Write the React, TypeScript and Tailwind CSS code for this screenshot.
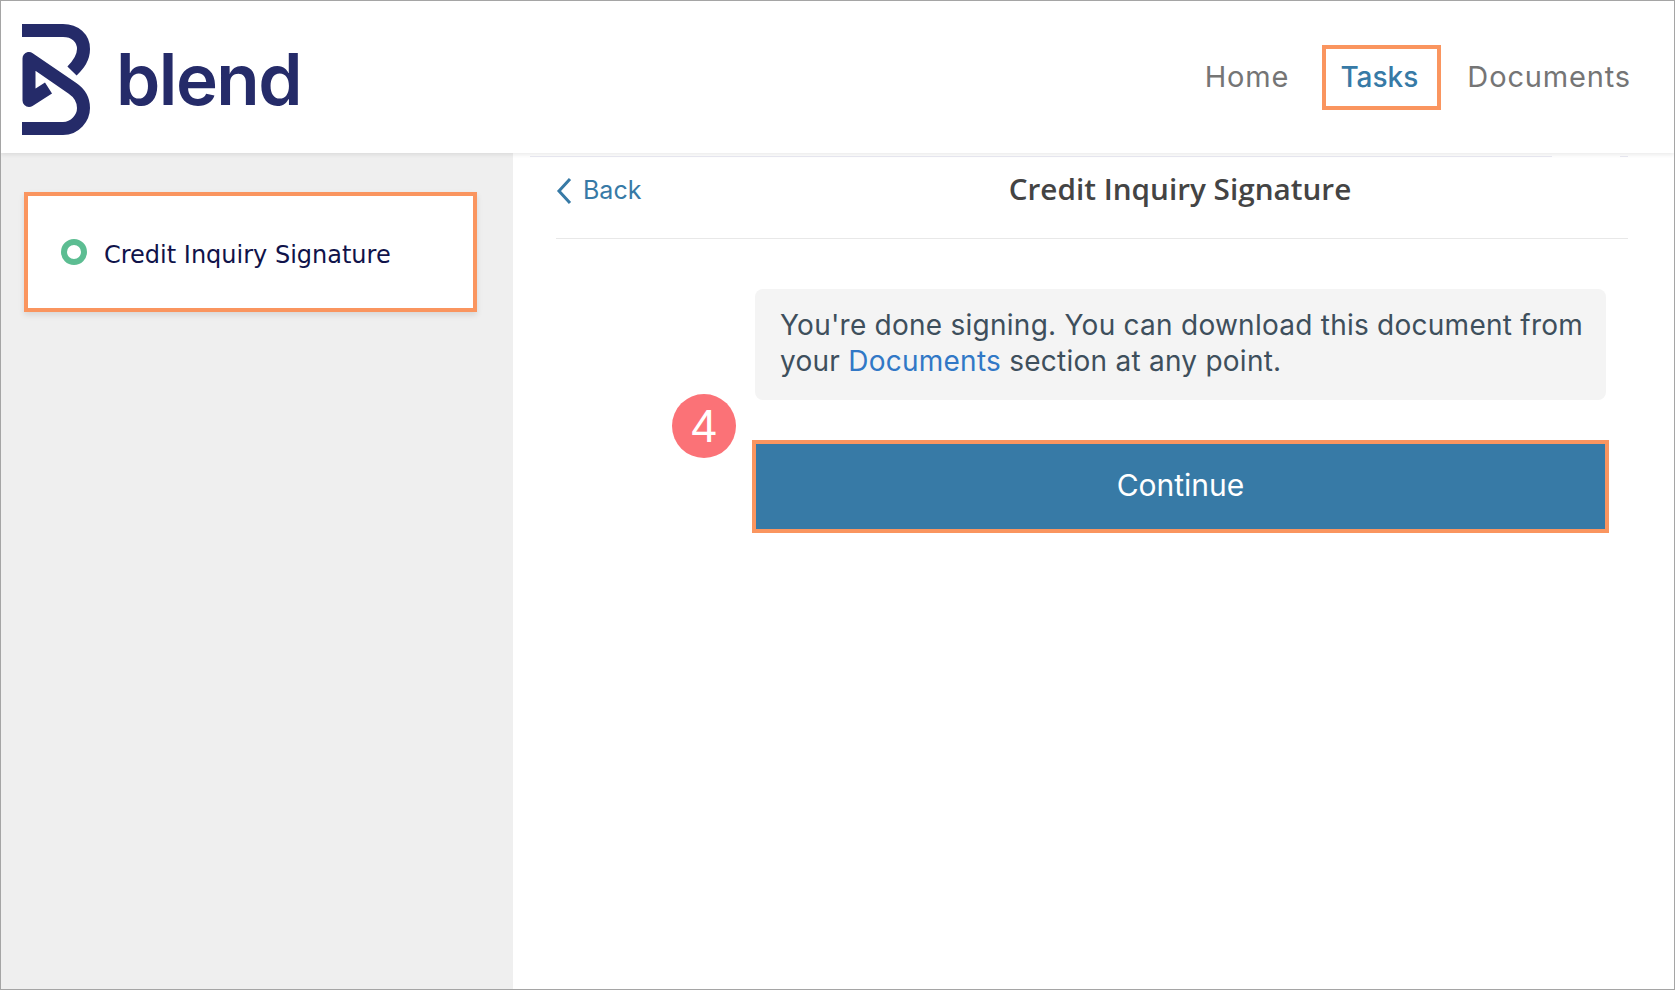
const inter = "font-['Inter',sans-serif]";

function Logo() {
  return (
    <div className="flex items-center gap-[24px] mt-[6px]">
      <svg width="70" height="112" viewBox="22 24 70 112" fill="none" stroke="#252b69" strokeWidth="13">
        <path d="M22 30.5H63C75 30.5 83.5 38 83.5 49C83.5 58 79 64 72 71" />
        <path d="M22 128.5H63C75 128.5 83.5 118 83.5 108C83.5 98 78 92 72 88L29 58.5V100.5L48.5 88" strokeLinejoin="round" />
      </svg>
      <span className="font-['Inter',sans-serif] font-semibold text-[71px] leading-none tracking-[-1.5px] text-[#252b69] mt-[-2px]">blend</span>
    </div>
  );
}

export default function App() {
  return (
    <div className="h-[990px] w-[1675px] border border-[#a5a5a5] flex flex-col overflow-hidden bg-white">
      <header className={`h-[152px] flex items-center justify-between pl-[21px] pr-[43px] bg-white shadow-[0_2px_4px_rgba(0,0,0,0.08)] relative ${inter}`}>
        <Logo />
        <nav className="flex items-center text-[29px] tracking-[0.85px] text-[#757575]">
          <a className="mr-[33px]">Home</a>
          <a className="w-[119px] h-[65px] border-4 border-[#fa955f] text-[#377aa6] text-[28px] font-medium tracking-normal flex items-center justify-center pr-[5px] mr-[26px]">Tasks</a>
          <a>Documents</a>
        </nav>
      </header>
      <div className="flex flex-1">
        <aside className="w-[512px] bg-[#efefef] pt-[39px] pl-[23px]">
          <div className="w-[453px] h-[120px] border-4 border-[#fa955f] bg-white shadow-[0_3px_6px_rgba(0,0,0,0.1)] flex items-center gap-[17px] pl-[33px]">
            <span className="w-[26px] h-[26px] rounded-full border-[6px] border-[#5cbd92]" />
            <span className="font-['DejaVu_Sans',sans-serif] text-[24px] text-[#10134a] mt-[5px]">Credit Inquiry Signature</span>
          </div>
        </aside>
        <main className="flex-1 pt-[3px] pl-[43px] pr-[46px]">
          <div className="flex h-px ml-[-26px]">
            <div className="flex-1 bg-[#e9e9f2]" />
            <div className="w-[68px]" />
            <div className="w-[8px] bg-[#e9e9f2]" />
          </div>
          <div className="h-[82px] border-b border-[#e8e8e8] relative flex items-center justify-center pl-[176px] pb-[17px]">
            <div className={`absolute left-0 top-[15px] flex items-center gap-[11px] text-[#377aa6] text-[25px] ${inter}`}>
              <svg width="16" height="28" viewBox="0 0 16 28" fill="none" stroke="#377aa6" strokeWidth="3"><path d="M14 2L3 14L14 26" /></svg>
              <span>Back</span>
            </div>
            <h1 className="font-['Open_Sans',sans-serif] font-semibold text-[29.7px] text-[#444444]">Credit Inquiry Signature</h1>
          </div>
          <div className={`ml-[199px] mr-[22px] mt-[50px] ${inter}`}>
            <div className="h-[111px] rounded-[8px] bg-[#f4f4f4] pl-[25px] pt-[18px] text-[28px] leading-[36px] tracking-[0.25px] text-[#3e4f5c] whitespace-nowrap">
              You're done signing. You can download this document from<br />
              your <a className="text-[#3178c6]">Documents</a> section at any point.
            </div>
            <div className="relative mt-[40px] -mx-[3px]">
              <span className="absolute left-[-80px] top-[-46px] w-[64px] h-[64px] rounded-full bg-[#fb7277] text-white text-[46px] flex items-center justify-center font-['Liberation_Sans',sans-serif]">4</span>
              <button className="w-full h-[93px] border-4 border-[#fa955f] bg-[#377aa6] text-white text-[30px] pb-[2px]">Continue</button>
            </div>
          </div>
        </main>
      </div>
    </div>
  );
}
